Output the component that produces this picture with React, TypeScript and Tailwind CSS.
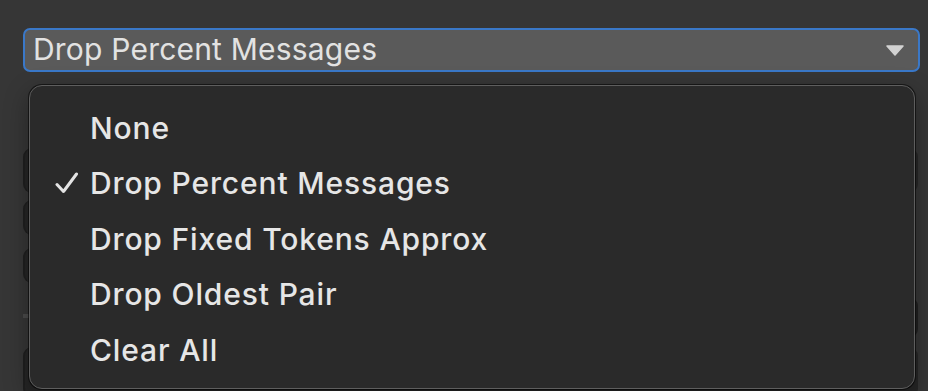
import React from 'react'

const options = ['None', 'Drop Percent Messages', 'Drop Fixed Tokens Approx', 'Drop Oldest Pair', 'Clear All']

function Check() {
  return (
    <svg width="24" height="22" viewBox="0 0 24 22" className="block">
      <path d="M2 12.5 L8.5 19.5 L21.5 2" fill="none" stroke="#e4e4e4" strokeWidth="3" strokeLinecap="round" strokeLinejoin="round" />
    </svg>
  )
}

function Caret() {
  return (
    <svg width="18" height="11" viewBox="0 0 18 11" className="block">
      <path d="M1 1 L17 1 L9 10 Z" fill="#d2d2d2" stroke="#d2d2d2" strokeWidth="1.5" strokeLinejoin="round" />
    </svg>
  )
}

export default function App() {
  const selected = 'Drop Percent Messages'

  return (
    <div
      className="relative w-[928px] h-[391px] overflow-hidden bg-[#363636] pt-[28px] pl-[23px] pr-[8px]"
      style={{ fontFamily: 'Inter, "Noto Sans", sans-serif' }}
    >
      {/* select */}
      <div className="flex items-center h-[44px] rounded-[7px] border-2 border-[#3a78c8] bg-[#5a5a5a] pl-[8px] pr-[14px]">
        <span className="flex-1 text-[30px] leading-none text-[#e2e2e2] tracking-[0.2px] -mt-[3px]">{selected}</span>
        <Caret />
      </div>

      {/* form fields underneath the open menu */}
      <div className="flex flex-col mt-[76px] pr-[2px]">
        <div className="h-[45px] rounded-[9px] bg-[#262626] border-l-2 border-[#1f1f1f]" />
        <div className="mt-[7px] h-[35px] w-[320px] rounded-[9px] bg-[#262626] border-l-2 border-[#1f1f1f]" />
        <div className="mt-[13px] h-[35px] w-[320px] rounded-[9px] bg-[#262626] border-l-2 border-[#1f1f1f]" />
        <div className="mt-[14px] h-[41px] flex justify-between items-center">
          <div className="w-[6px] h-[4px] bg-[#4a4a4a] -mt-[3px]" />
          <div className="h-full w-[320px] rounded-[9px] bg-[#262626] border-r-2 border-[#1f1f1f]" />
        </div>
        <div className="mt-[9px] h-[50px] rounded-[9px] bg-[#262626] border-l-2 border-[#1f1f1f]" />
      </div>

      {/* open menu */}
      <div className="absolute left-[29px] top-[85px] w-[886px] h-[304px] rounded-[13px] border border-[#5e5e5e] bg-[#2a2a2a] shadow-[0_0_0_1px_rgba(0,0,0,0.55),0_8px_24px_rgba(0,0,0,0.35)] pt-[14px]">
        {options.map((opt) => (
          <div key={opt} className="flex items-center h-[55.5px]">
            <div className="w-[60px] flex justify-end pr-[11px]">
              {opt === selected && <Check />}
            </div>
            <span className="text-[30px] leading-none font-medium text-[#e6e6e6] tracking-[0.85px]">{opt}</span>
          </div>
        ))}
      </div>
    </div>
  )
}
